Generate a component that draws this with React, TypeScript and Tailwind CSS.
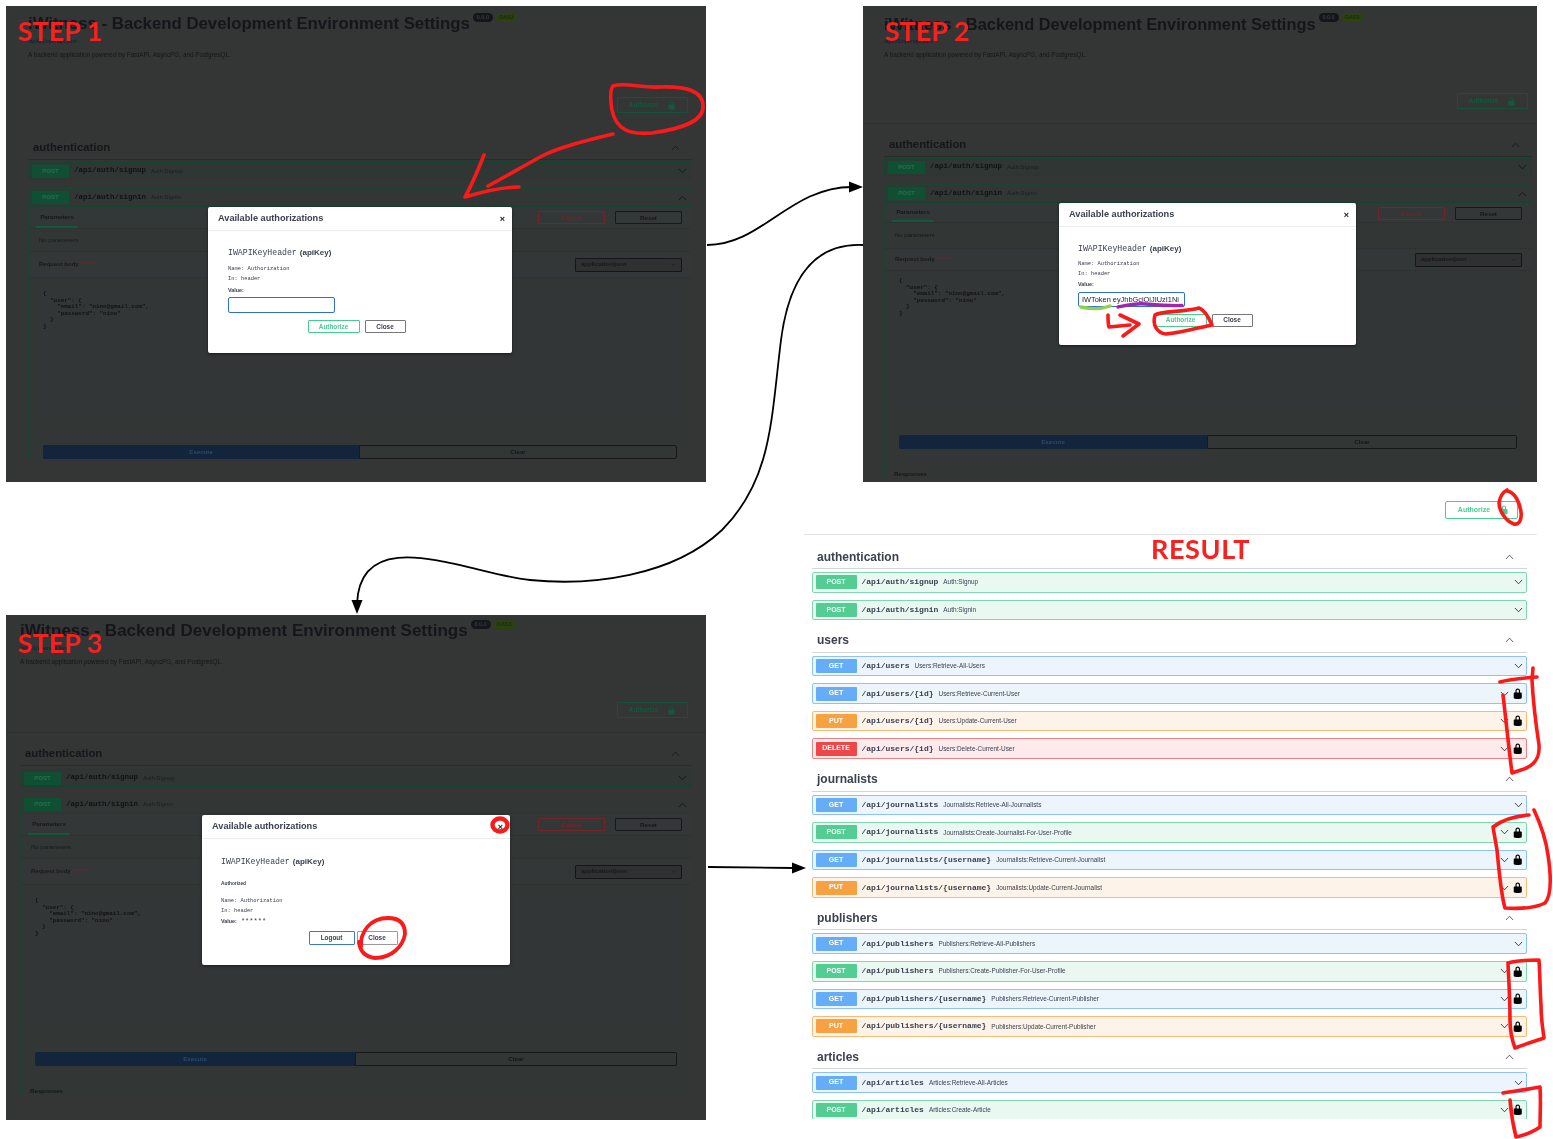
import React from "react";

const LOCK_CLOSED =
  "M15.8 8H14V5.6C14 2.703 12.665 1 10 1 7.334 1 6 2.703 6 5.6V8H4c-.553 0-1 .646-1 1.199V17c0 .549.428 1.139.951 1.307l1.197.387C5.672 18.861 6.55 19 7.1 19h5.8c.549 0 1.428-.139 1.951-.307l1.196-.387c.524-.167.953-.757.953-1.306V9.199C17 8.646 16.352 8 15.8 8zM12 8H8V5.199C8 3.754 8.797 3 10 3c1.203 0 2 .754 2 2.199V8z";
const LOCK_OPEN =
  "M15.8 8H14V5.6C14 2.703 12.665 1 10 1 7.334 1 6 2.703 6 5.6V6h2v-.801C8 3.754 8.797 3 10 3c1.203 0 2 .754 2 2.199V8H4c-.553 0-1 .646-1 1.199V17c0 .549.428 1.139.951 1.307l1.197.387C5.672 18.861 6.55 19 7.1 19h5.8c.549 0 1.428-.139 1.951-.307l1.196-.387c.524-.167.953-.757.953-1.306V9.199C17 8.646 16.352 8 15.8 8z";

const sans = "font-['Liberation_Sans',Arial,sans-serif]";
const mono = "font-['Liberation_Mono','Courier_New',monospace]";
const label = "font-['Lato','Open_Sans',sans-serif]";

function Lock({ open, cls }: { open?: boolean; cls: string }) {
  return (
    <svg viewBox="0 0 20 20" className={cls} fill="currentColor">
      <path d={open ? LOCK_OPEN : LOCK_CLOSED} />
    </svg>
  );
}

function Chevron({ up, cls }: { up?: boolean; cls: string }) {
  return (
    <svg viewBox="0 0 20 12" className={cls} fill="none" stroke="currentColor" strokeWidth="1.8">
      <polyline points={up ? "2,10.5 10,2 18,10.5" : "2,1.5 10,10 18,1.5"} />
    </svg>
  );
}

/* ---------- Dialogs ---------- */
function DialogHead() {
  return (
    <div className="flex h-[24px] items-center justify-between border-b border-[#ececec] pl-[10px] pr-[7px] pt-[1px]">
      <span className="text-[9.2px] font-bold text-[#3b4151]">Available authorizations</span>
      <span className="text-[9px] font-bold leading-none text-[#222]">×</span>
    </div>
  );
}

function SchemeTitle() {
  return (
    <div className="flex items-baseline text-[#3b4151]">
      <span className={`${mono} text-[8.2px]`}>IWAPIKeyHeader</span>
      <span className="ml-[3px] text-[8px] font-bold">(apiKey)</span>
    </div>
  );
}

function DialogForm({ frame, value, tight }: { frame: string; value?: string; tight?: boolean }) {
  const line = tight ? "leading-[9.5px]" : "leading-[10px]";
  return (
    <div className={`absolute ${frame} ${sans} rounded-[2px] bg-white shadow-[0_1px_3px_rgba(0,0,0,0.5)]`}>
      <DialogHead />
      <div className={`${tight ? "px-[19px]" : "px-[20px]"} pt-[16px]`}>
        <SchemeTitle />
        <p className={`${mono} ${tight ? "mt-[5px]" : "mt-[5px]"} text-[5.4px] ${line} text-[#3b4151]`}>Name: Authorization</p>
        <p className={`${mono} text-[5.4px] ${line} text-[#3b4151]`}>In: header</p>
        <p className={`mt-[1px] text-[5.4px] font-bold ${line} text-[#3b4151]`}>Value:</p>
        <div
          className={`mt-[2px] flex ${tight ? "h-[15px]" : "h-[16px]"} w-[107px] items-center rounded-[2px] border border-[#2f6fd0] px-[3px] text-[7.4px] text-[#222]`}
        >
          {value}
        </div>
        <div className={`${tight ? "mt-[7px] pr-[8px]" : "mt-[7px] pr-[7px]"} flex justify-center gap-[5px]`}>
          <span className="flex h-[13px] w-[52px] items-center justify-center rounded-[1px] border border-[#49cc90] text-[6.4px] font-bold text-[#49cc90]">
            Authorize
          </span>
          <span className="flex h-[13px] w-[41px] items-center justify-center rounded-[1px] border border-[#777] text-[6.4px] font-bold text-[#3b4151]">
            Close
          </span>
        </div>
      </div>
    </div>
  );
}

function DialogAuthorized() {
  return (
    <div className={`absolute left-[196px] top-[200px] h-[150px] w-[308px] ${sans} rounded-[2px] bg-white shadow-[0_1px_3px_rgba(0,0,0,0.5)]`}>
      <DialogHead />
      <div className="px-[19px] pt-[17px]">
        <SchemeTitle />
        <p className="mt-[12px] text-[4.8px] font-bold leading-[8px] text-[#3b4151]">Authorized</p>
        <p className={`${mono} mt-[8px] text-[5.4px] leading-[10px] text-[#3b4151]`}>Name: Authorization</p>
        <p className={`${mono} text-[5.4px] leading-[10px] text-[#3b4151]`}>In: header</p>
        <p className="flex items-center text-[5.4px] font-bold leading-[10px] text-[#3b4151]">
          Value:<span className={`${mono} ml-[4px] text-[7px] font-normal`}>******</span>
        </p>
        <div className="mt-[5px] flex justify-center gap-[2px] pr-[6px]">
          <span className="flex h-[14px] w-[46px] items-center justify-center rounded-[1px] border border-[#3f78c8] text-[6.4px] font-bold text-[#3b4151]">
            Logout
          </span>
          <span className="flex h-[14px] w-[41px] items-center justify-center rounded-[1px] border border-[#999] text-[6.4px] font-bold text-[#3b4151]">
            Close
          </span>
        </div>
      </div>
    </div>
  );
}

/* ---------- Dimmed swagger page ---------- */
function DimOp({ path, summary, expanded }: { path: string; summary: string; expanded?: boolean }) {
  return (
    <div className={`flex items-center pl-[3px] pr-[3px] ${expanded ? "h-[18px] border-b border-[#15432f]" : "h-[16px]"}`}>
      <span className="flex h-[13px] w-[37px] items-center justify-center rounded-[1px] bg-[#0f5034] text-[6px] font-bold text-[#2a6e50]">
        POST
      </span>
      <span className={`${mono} ml-[5px] text-[7.5px] font-bold text-[#101114]`}>{path}</span>
      <span className="ml-[5px] text-[5.8px] text-[#1b1d21]">{summary}</span>
      <Chevron up={expanded} cls="ml-auto mr-[1px] h-[6px] w-[9px] text-[#101214]" />
    </div>
  );
}

type PanelProps = {
  frame: string;
  label: string;
  tight?: boolean;
  ruled?: boolean;
  responses?: boolean;
  pad: string;
  authPad: string;
  authTop: string;
  titleTop: string;
  titleSize: string;
  labelPos: string;
  sectionTop: string;
  opTop: string;
  children: React.ReactNode;
};

function DimPanel(p: PanelProps) {
  const { tight } = p;
  return (
    <section className={`absolute ${p.frame} ${sans} overflow-hidden bg-[#343535]`}>
      <header className={p.ruled ? "border-b border-[#2e2f2f] pb-[14px]" : ""}>
        <div className={`${p.pad} ${p.titleTop}`}>
          <div className="flex items-start">
            <h1 className={`${p.titleSize} font-bold leading-[20px] text-[#15161a]`}>
              iWitness - Backend Development Environment Settings
            </h1>
            <span className="ml-[3px] mt-[-1px] flex h-[9px] w-[20px] items-center justify-center rounded-[5px] bg-[#14161b] text-[5.5px] font-bold text-[#3a3b3b]">
              0.0.0
            </span>
            <span className="ml-[3px] mt-[-1px] flex h-[9px] w-[21px] items-center justify-center rounded-[5px] bg-[#2a4310] text-[5.5px] font-bold text-[#1d2a0c]">
              OAS3
            </span>
          </div>
          <p className="mt-[1px] h-[12px] text-[5.5px] leading-[12px] text-[#0e1f33]">/api/v1/openapi.json</p>
          <p className="mt-[3px] text-[6.4px] leading-[10px] text-[#15161a]">
            A backend application powered by FastAPI, AsyncPG, and PostgresQL.
          </p>
        </div>
        <div className={`flex justify-end ${p.authPad} ${p.authTop}`}>
          <span className="flex h-[16px] w-[71px] items-center justify-center gap-[9px] rounded-[1px] border border-[#15523a] text-[6.4px] font-bold text-[#15583d]">
            Authorize
            <Lock open cls="h-[9px] w-[9px] text-[#15583d]" />
          </span>
        </div>
      </header>
      <div className={`${p.pad} ${p.sectionTop}`}>
        <div className="flex h-[24px] items-center justify-between border-b border-[#2a2b2b] pl-[5px] pr-[12px]">
          <span className="text-[11.3px] font-bold text-[#15161a]">authentication</span>
          <Chevron up cls="h-[6px] w-[9px] text-[#15161a]" />
        </div>
        <div className={`${p.opTop} rounded-[2px] border border-[#15432f] bg-[#303633]`}>
          <DimOp path="/api/auth/signup" summary="Auth:Signup" />
        </div>
        <div className="mt-[8px] rounded-t-[2px] border border-b-0 border-[#1c4433] bg-[#323736]">
          <DimOp path="/api/auth/signin" summary="Auth:Signin" expanded />
          <div className={`flex items-start justify-between border-b border-[#2e3231] bg-[#343737] ${tight ? "h-[20px]" : "h-[22px]"} pl-[7px] pr-[9px]`}>
            <span className="flex h-full w-[42px] items-center justify-center border-b-2 border-[#10593b] text-[6.2px] font-bold text-[#15161a]">
              Parameters
            </span>
            <div className="mt-[4px] flex gap-[10px]">
              <span className="flex h-[13px] w-[67px] items-center justify-center rounded-[1px] border border-[#752528] text-[6.2px] font-bold text-[#752528]">
                Cancel
              </span>
              <span className="flex h-[13px] w-[67px] items-center justify-center rounded-[1px] border border-[#17181c] text-[6.2px] font-bold text-[#15161a]">
                Reset
              </span>
            </div>
          </div>
          <div className={`flex items-center pl-[10px] text-[6px] text-[#17181c] ${tight ? "h-[25px]" : "h-[22px]"}`}>No parameters</div>
          <div className={`flex items-center justify-between border-y border-[#2e3231] bg-[#343737] pl-[10px] pr-[9px] ${tight ? "h-[23px]" : "h-[27px]"}`}>
            <span className="text-[6px] font-bold text-[#17181c]">
              Request body <sup className="text-[4px] font-normal text-[#752528]">required</sup>
            </span>
            <span className="flex h-[14px] w-[107px] items-center justify-between rounded-[1px] border border-[#141518] bg-[#2f3030] px-[5px] text-[6px] font-bold text-[#17181c]">
              application/json
              <Chevron cls="h-[3px] w-[5px] text-[#17181c]" />
            </span>
          </div>
          <div className={`${tight ? "mt-[4px] h-[134px]" : "mt-[10px] h-[130px]"} mx-[9px] rounded-[2px] bg-[#323636] px-[5px] pt-[3px]`}>
            <pre className={`${mono} text-[5.9px] font-bold leading-[6.6px] text-[#101214]`}>
{`{
  "user": {
    "email": "nino@gmail.com",
    "password": "nino"
  }
}`}
            </pre>
          </div>
          <div className={`flex px-[14px] ${tight ? "mt-[26px]" : "mt-[27px]"}`}>
            <span className="flex h-[14px] flex-1 items-center justify-center rounded-l-[2px] bg-[#12253c] text-[6.2px] font-bold text-[#2a4a68]">
              Execute
            </span>
            <span className="flex h-[14px] flex-1 items-center justify-center rounded-r-[2px] border border-[#17181c] text-[6.2px] font-bold text-[#15161a]">
              Clear
            </span>
          </div>
          {p.responses && <p className="mt-[20px] pl-[9px] text-[6.2px] font-bold text-[#15161a]">Responses</p>}
        </div>
      </div>
      <span className={`absolute ${p.labelPos} ${label} text-[27px] font-bold leading-none text-[#f8211f]`}>{p.label}</span>
      {p.children}
    </section>
  );
}

/* ---------- Result page ---------- */
type Method = "POST" | "GET" | "PUT" | "DELETE";
const styles: Record<Method, { row: string; badge: string }> = {
  POST: { row: "border-[#7fd9b0] bg-[#e9f8f1]", badge: "bg-[#53cd92]" },
  GET: { row: "border-[#8cc3fb] bg-[#ecf4fc]", badge: "bg-[#66adf8]" },
  PUT: { row: "border-[#f8ba76] bg-[#fdf3e8]", badge: "bg-[#f6a243]" },
  DELETE: { row: "border-[#ef8083] bg-[#fdeaea]", badge: "bg-[#ef4648]" },
};

function Op({ method, path, summary, locked }: { method: Method; path: string; summary: string; locked?: boolean }) {
  const s = styles[method];
  return (
    <div className={`flex h-[20.5px] items-center rounded-[2px] border pl-[2.5px] pr-[2px] ${s.row}`}>
      <span className={`flex h-[14px] w-[41px] shrink-0 items-center justify-center rounded-[1px] text-[7px] font-bold text-white ${s.badge}`}>
        {method}
      </span>
      <span className={`${mono} ml-[5px] text-[8px] font-bold text-[#3b4151]`}>{path}</span>
      <span className="ml-[5px] text-[6.4px] text-[#3b4151]">{summary}</span>
      {locked ? (
        <>
          <Chevron cls="ml-auto h-[6px] w-[9px] text-[#222]" />
          <Lock cls="ml-[3px] mr-[0.5px] h-[11.5px] w-[11.5px] text-black" />
        </>
      ) : (
        <Chevron cls="ml-auto mr-[1px] h-[6px] w-[9px] text-[#222]" />
      )}
    </div>
  );
}

type OpDef = [Method, string, string, boolean?];
const sections: { name: string; ops: OpDef[] }[] = [
  {
    name: "authentication",
    ops: [
      ["POST", "/api/auth/signup", "Auth:Signup"],
      ["POST", "/api/auth/signin", "Auth:Signin"],
    ],
  },
  {
    name: "users",
    ops: [
      ["GET", "/api/users", "Users:Retrieve-All-Users"],
      ["GET", "/api/users/{id}", "Users:Retrieve-Current-User", true],
      ["PUT", "/api/users/{id}", "Users:Update-Current-User", true],
      ["DELETE", "/api/users/{id}", "Users:Delete-Current-User", true],
    ],
  },
  {
    name: "journalists",
    ops: [
      ["GET", "/api/journalists", "Journalists:Retrieve-All-Journalists"],
      ["POST", "/api/journalists", "Journalists:Create-Journalist-For-User-Profile", true],
      ["GET", "/api/journalists/{username}", "Journalists:Retrieve-Current-Journalist", true],
      ["PUT", "/api/journalists/{username}", "Journalists:Update-Current-Journalist", true],
    ],
  },
  {
    name: "publishers",
    ops: [
      ["GET", "/api/publishers", "Publishers:Retrieve-All-Publishers"],
      ["POST", "/api/publishers", "Publishers:Create-Publisher-For-User-Profile", true],
      ["GET", "/api/publishers/{username}", "Publishers:Retrieve-Current-Publisher", true],
      ["PUT", "/api/publishers/{username}", "Publishers:Update-Current-Publisher", true],
    ],
  },
  {
    name: "articles",
    ops: [
      ["GET", "/api/articles", "Articles:Retrieve-All-Articles"],
      ["POST", "/api/articles", "Articles:Create-Article", true],
    ],
  },
];

function Result() {
  return (
    <section className={`absolute left-[804px] top-[488px] h-[631px] w-[733px] overflow-hidden ${sans} text-[#3b4151]`}>
      <div className="flex h-[47px] justify-end border-b border-[#e4e4e4] pr-[19px] pt-[13px]">
        <span className="flex h-[18px] w-[73px] items-center justify-center gap-[9px] rounded-[2px] border border-[#49cc90] pl-[4px] text-[7px] font-bold text-[#49cc90]">
          Authorize
          <Lock cls="h-[10px] w-[10px] text-[#49cc90]" />
        </span>
      </div>
      <div className="pl-[8px] pr-[10px] pt-[10px]">
        {sections.map((sec, i) => (
          <div key={sec.name} className={i ? "mt-[8.6px]" : ""}>
            <div className="flex h-[24px] items-center justify-between border-b border-[#d4d5d8] pl-[5px] pr-[13px]">
              <span className="text-[12px] font-bold">{sec.name}</span>
              <Chevron up cls="h-[6px] w-[9px] text-[#3b4151]" />
            </div>
            <div className="mt-[3px] flex flex-col gap-[7.1px]">
              {sec.ops.map((o) => (
                <Op key={o[0] + o[1]} method={o[0]} path={o[1]} summary={o[2]} locked={o[3]} />
              ))}
            </div>
          </div>
        ))}
      </div>
      <span className={`absolute left-[347px] top-[47px] ${label} text-[27px] font-bold leading-none tracking-[0.6px] text-[#f8211f]`}>RESULT</span>
    </section>
  );
}

/* ---------- Hand-drawn annotations ---------- */
function Marks() {
  const red = { stroke: "#fb1a1a", fill: "none", strokeLinecap: "round" as const, strokeLinejoin: "round" as const };
  return (
    <svg viewBox="0 0 1553 1139" className="pointer-events-none absolute left-0 top-0 h-[1139px] w-[1553px]">
      {/* flow arrows */}
      <g fill="none" stroke="#000" strokeWidth="1.8">
        <path d="M707 245 C762 245 790 187 852 187" />
        <path d="M863 245 C820 243 790 270 781 340 C771 420 772 480 722 530 C672 577 590 586 530 580 C470 574 360 520 357 604" />
        <path d="M708 867 L794 868" />
      </g>
      <polygon points="863,187 849,181.5 849,192.5" fill="#000" />
      <polygon points="357,614 351.5,600 362.5,600" fill="#000" />
      <polygon points="806,868 792,862.5 792,873.5" fill="#000" />

      {/* step 1 */}
      <g {...red} strokeWidth="3.6">
        <path d="M613 86 C625 82 640 88 660 87 C686 86 703 91 703 106 C704 122 680 129 652 133 C630 135 616 130 612 110 C610 98 610 90 613 86" />
        <path d="M613 134 C585 141 560 147 542 156 C520 168 505 177 488 186" />
        <path d="M484 155 C478 170 472 185 465 197 C482 192 500 187 519 187" />
      </g>

      {/* step 2 */}
      <path d="M1081 307 C1090 309 1102 309 1110 306" fill="none" stroke="#8fd14f" strokeWidth="3.4" strokeLinecap="round" />
      <path d="M1118 307 C1128 305 1136 303 1146 304 C1158 305 1170 306 1182 305.5" fill="none" stroke="#9c27b0" strokeWidth="3.4" strokeLinecap="round" />
      <g {...red} strokeWidth="3.6">
        <path d="M1108 315 C1108 320 1108 324 1109 327 L1130 325" />
        <path d="M1120 315 L1139 324 L1123 336" />
        <path d="M1155 315 C1160 311 1185 312 1199 308 C1205 310 1209 318 1212 325 C1198 328 1180 333 1166 334 C1157 333 1152 325 1155 315" />
      </g>

      {/* step 3 */}
      <g {...red}>
        <ellipse cx="500" cy="825" rx="7.5" ry="6.5" strokeWidth="4.4" />
        <path
          strokeWidth="3.8"
          d="M361 947 C360 932 370 918 388 918 C400 918 405 924 405 934 C403 946 392 958 375 958 C366 957 360 952 359 942"
        />
      </g>

      {/* result */}
      <g {...red} strokeWidth="3.6">
        <path d="M1507 491 C1515 492 1520 503 1521 512 C1522 520 1519 525 1514 524 C1505 521 1499 510 1499 503 C1500 497 1503 492 1507 490" />
        <path d="M1533 668 L1532 680 C1533 700 1536 725 1539 745 C1540 758 1535 766 1521 770 L1512 773 C1509 750 1506 720 1503 695" />
        <path d="M1500 682 C1510 679 1525 678 1537 677" />
        <path d="M1534 810 C1541 825 1546 840 1548 855 C1551 875 1552 895 1545 903 C1535 908 1520 909 1505 908 C1501 895 1499 870 1497 850 L1493 827 C1502 820 1515 816 1529 815" />
        <path d="M1508 963 C1518 960 1530 960 1539 960 C1540 975 1540 990 1541 1005 C1541 1020 1543 1030 1544 1038 C1535 1041 1525 1044 1515 1048 C1512 1040 1510 1030 1510 1020 C1510 1000 1509 985 1508 963" />
        <path d="M1503 1093 C1515 1091 1530 1089 1540 1087 C1541 1100 1540 1115 1540 1127 C1533 1132 1525 1135 1516 1137 C1513 1125 1511 1112 1510 1100" />
      </g>
    </svg>
  );
}

export default function App() {
  return (
    <main className="relative h-[1139px] w-[1553px] overflow-hidden bg-white blur-[0.35px]">
      <DimPanel
        frame="left-[6px] top-[6px] h-[476px] w-[700px]"
        label="STEP 1"
        pad="pl-[22px] pr-[14px]"
        authPad="pr-[18px]"
        authTop="mt-[37px]"
        titleTop="pt-[8px]"
        titleSize="text-[16.8px]"
        labelPos="left-[12px] top-[11px]"
        sectionTop="mt-[23px]"
        opTop="mt-[2px]"
      >
        <DialogForm frame="left-[202px] top-[201px] h-[146px] w-[304px]" />
      </DimPanel>

      <DimPanel
        frame="left-[863px] top-[6px] h-[476px] w-[674px]"
        label="STEP 2"
        tight
        ruled
        pad="pl-[21px] pr-[5px]"
        authPad="pr-[9px]"
        authTop="mt-[33px]"
        titleTop="pt-[8px]"
        titleSize="text-[16.4px]"
        labelPos="left-[22px] top-[11px]"
        sectionTop="mt-[9px]"
        opTop="mt-[1px]"
        responses
      >
        <DialogForm frame="left-[196px] top-[197px] h-[142px] w-[297px]" value="IWToken eyJhbGciOiJIUzI1Ni" tight />
      </DimPanel>

      <DimPanel
        frame="left-[6px] top-[615px] h-[505px] w-[700px]"
        label="STEP 3"
        ruled
        pad="pl-[14px] pr-[14px]"
        authPad="pr-[18px]"
        authTop="mt-[35px]"
        titleTop="pt-[6px]"
        titleSize="text-[17px]"
        labelPos="left-[12px] top-[14px]"
        sectionTop="mt-[9px]"
        opTop="mt-[3px]"
        responses
      >
        <DialogAuthorized />
      </DimPanel>

      <Result />
      <Marks />
    </main>
  );
}
